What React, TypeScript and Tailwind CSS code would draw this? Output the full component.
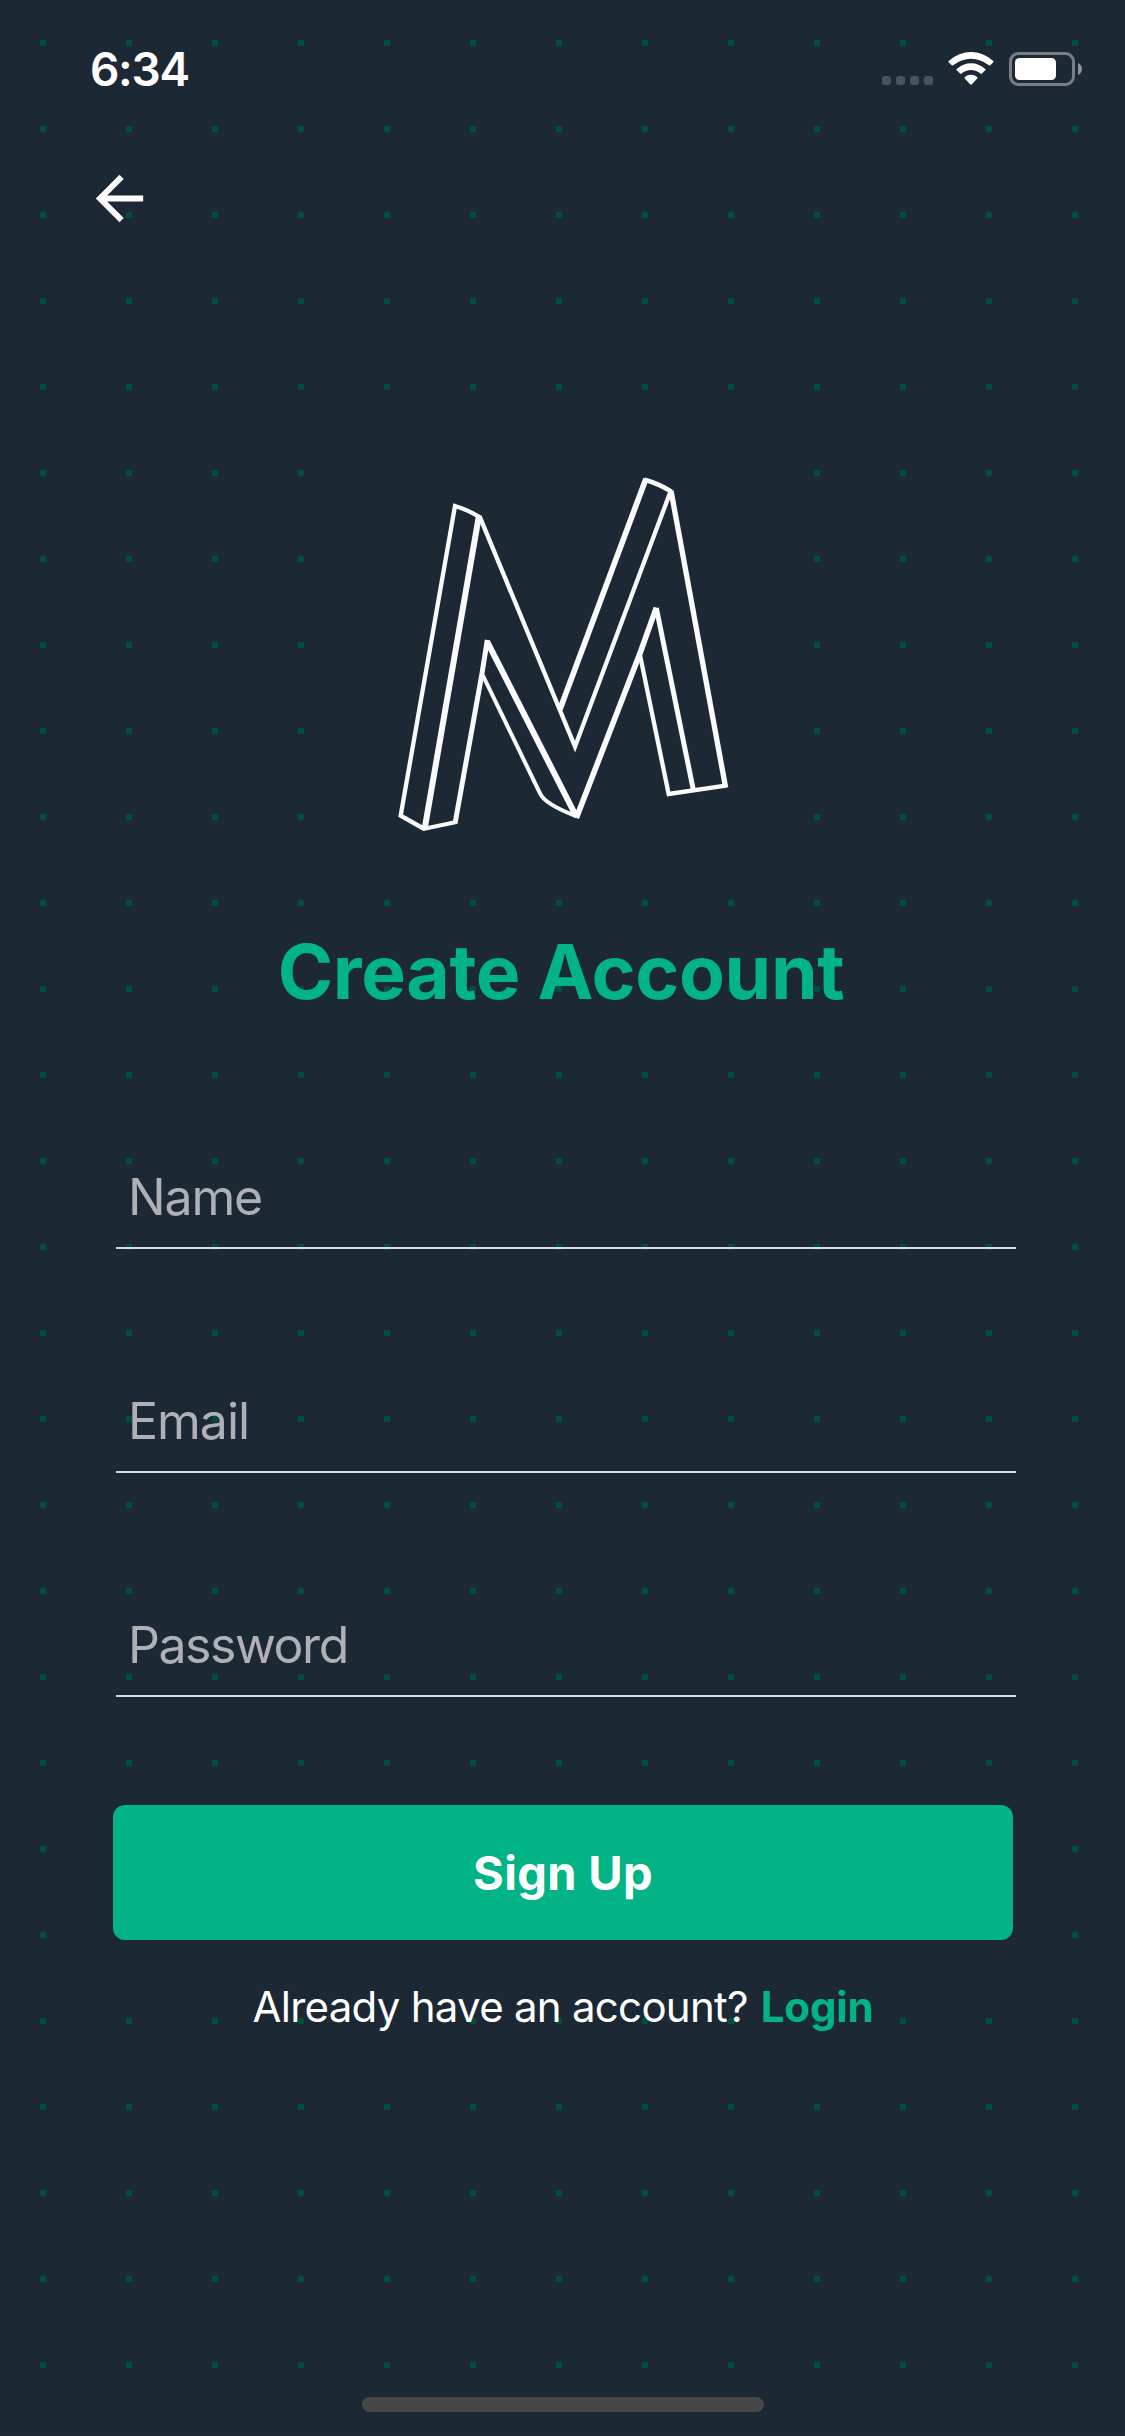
function StatusBar() {
  return (
    <div className="flex h-[137px] items-center justify-between pl-[90px] pr-[42px]">
      <time className="text-[46px] leading-none font-semibold tracking-[-1.3px] text-white">6:34</time>
      <svg className="h-[41px] w-[201px]" viewBox="0 0 201 41" fill="none">
        <g fill="#4b545d">
          <rect x="0" y="28" width="9" height="9" rx="3" />
          <rect x="14" y="28" width="9" height="9" rx="3" />
          <rect x="28" y="28" width="9" height="9" rx="3" />
          <rect x="42" y="28" width="9" height="9" rx="3" />
        </g>
        <g fill="#fff" transform="translate(0 0.5)">
          <path d="M66.700 12.400Q77 3.500 89 3.500T111.300 12.400Q112 13 111.300 13.700L108.300 16.700Q107.600 17.400 106.900 16.800Q98.500 10.300 89 10.300T71.100 16.800Q70.400 17.400 69.700 16.700L66.700 13.700Q66 13 66.700 12.400Z" />
          <path d="M74.700 20.500Q81.200 14.800 89 14.800T103.300 20.500Q104 21.100 103.300 21.800L99.900 25.100Q99.200 25.700 98.500 25.100Q94.300 21.600 89 21.600T79.500 25.100Q78.800 25.700 78.100 25.100L74.700 21.800Q74 21.100 74.700 20.500Z" />
          <path d="M82.900 28.600Q85.500 26.300 89 26.300T95.100 28.600Q95.800 29.300 95.200 30L89.900 35.700Q89 36.600 88.100 35.700L82.800 30Q82.200 29.300 82.900 28.600Z" />
        </g>
        <rect x="128.500" y="5.500" width="63" height="31" rx="8" stroke="#777e85" strokeWidth="3" />
        <rect x="133" y="10" width="41" height="22" rx="4.500" fill="#fff" />
        <path d="M196 15C198.600 16.100 200 18.400 200 21S198.600 25.900 196 27Z" fill="#8d9399" />
      </svg>
    </div>
  );
}

function Logo() {
  return (
    <div className="mt-[221px] ml-[362px] size-[400px] bg-[#1c2833]">
      <svg className="size-full" viewBox="-54 -18 1200 1200" fill="none" stroke="#fafafa" strokeLinejoin="miter">
        <path strokeWidth="13" d="M133 1107L62 1067L225 138Q262 149 300 172L585 860L871 96" />
        <path strokeWidth="18" d="M296 172L134 1106" />
        <path strokeWidth="12" d="M129 1107L226 1087" />
        <path strokeWidth="15" strokeLinejoin="bevel" d="M225 1091L306 640L322 540" />
        <path strokeWidth="18" d="M321 544L588 1068" />
        <path strokeWidth="12" d="M308 645L480 1000Q494 1033 590 1069" />
        <path strokeWidth="17" strokeLinejoin="bevel" d="M589 1074L780 580L829 443" />
        <path strokeWidth="15" d="M829 444L940 990" />
        <path strokeWidth="13" d="M779 580L866 1002L1037 977" />
        <path strokeWidth="16" d="M1037 983L873 92" />
        <path strokeWidth="17" d="M540 748L798 56" />
        <path strokeWidth="14" d="M794 59Q840 72 874 95" />
      </svg>
    </div>
  );
}

const fields = [
  { name: "Name", tracking: "tracking-[-1.15px]" },
  { name: "Email", tracking: "tracking-[-1px]" },
  { name: "Password", tracking: "tracking-[-1.45px]" },
];

export default function App() {
  return (
    <div className="relative flex h-[2436px] w-[1125px] flex-col overflow-hidden border-b border-[#20242f] bg-[#1c2833] font-['Inter',sans-serif]">
      {/* 6px squares on an 86px grid */}
      <svg className="pointer-events-none absolute inset-0 size-full" aria-hidden="true">
        <defs>
          <pattern id="dots" x="40" y="40" width="86" height="86" patternUnits="userSpaceOnUse">
            <rect width="6" height="6" fill="#004f3b" />
          </pattern>
        </defs>
        <rect width="100%" height="100%" fill="url(#dots)" />
      </svg>

      <div className="relative flex flex-1 flex-col">
        <StatusBar />

        <header className="h-[96px] pt-[25.500px] pl-[83.500px]">
          <button aria-label="Back" className="block">
            <svg className="size-[71px]" viewBox="0 0 24 24" fill="#fff">
              <path d="M20 11H7.830l5.590-5.590L12 4l-8 8 8 8 1.410-1.410L7.830 13H20v-2z" />
            </svg>
          </button>
        </header>

        <Logo />

        <h1 className="mt-[78px] pr-[3px] text-center text-[75px] leading-[80px] font-bold tracking-[-0.36px] text-[#02b386]">
          Create Account
        </h1>

        <form className="ml-[116px] flex w-[900px] flex-col gap-[122px] pt-[135px]">
          {fields.map((f) => (
            <label key={f.name} className="block h-[102px] border-b-2 border-[#d9dbe0] pl-3 text-[50px] leading-[100px] text-[#aeb0b5]">
              <span className={f.tracking}>{f.name}</span>
            </label>
          ))}
        </form>

        <button className="mt-[108px] ml-[113px] h-[135px] w-[900px] rounded-xl bg-[#02b386] pt-0.5 text-[47px] font-bold tracking-[0.33px] text-white">
          Sign Up
        </button>

        <p className="mt-[37px] flex gap-[13px] pl-[252.500px] text-[42px] leading-[60px] whitespace-nowrap text-white">
          <span className="tracking-[-0.73px]">Already have an account?</span>
          <a className="font-bold tracking-[-0.2px] text-[#02b386]">Login</a>
        </p>

        <div className="mt-auto mb-[23px] ml-[362px] h-[15px] w-[402px] rounded-full bg-[#474747]" />
      </div>
    </div>
  );
}
